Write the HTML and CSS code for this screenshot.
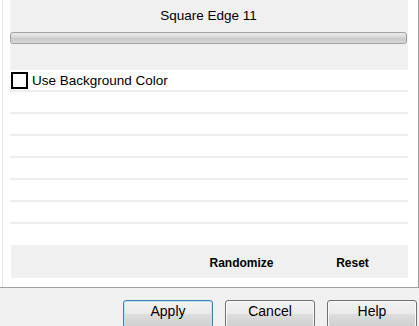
FILE: index.html
```html
<!DOCTYPE html>
<html>
<head>
<meta charset="utf-8">
<link rel="stylesheet" href="styles.css">
</head>
<body>
<div class="top">
  <div class="frame">
    <div class="panel">
      <div class="header">
        <div class="title">Square Edge 11</div>
        <div class="slider"></div>
      </div>
      <div class="row first">
        <span class="check"></span><span class="label">Use Background Color</span>
      </div>
      <div class="row"></div>
      <div class="row"></div>
      <div class="row"></div>
      <div class="row"></div>
      <div class="row"></div>
      <div class="row"></div>
      <div class="row last"></div>
      <div class="actions">
        <span class="spacer"></span>
        <span class="action">Randomize</span>
        <span class="action">Reset</span>
      </div>
    </div>
  </div>
</div>
<div class="bottom">
  <button class="btn default">Apply</button>
  <button class="btn">Cancel</button>
  <button class="btn">Help</button>
</div>
</body>
</html>
```
FILE: styles.css
```css
html, body {
  margin: 0;
  padding: 0;
  width: 419px;
  height: 326px;
  overflow: hidden;
  background: #f0f0f0;
  font-family: "Liberation Sans", Arial, sans-serif;
  color: #000;
}
.top {
  height: 287px;
  background: #fff;
  border-bottom: 1px solid #a0a0a0;
  display: flex;
}
.frame {
  margin-left: 2px;
  width: 404px;
  border-left: 1px solid #e6e6e6;
  border-right: 1px solid #9a9a9a;
  padding: 0 6px 0 7px;
}
.panel {
  width: 398px;
  display: flex;
  flex-direction: column;
}
.header {
  height: 70px;
  background: #f0f0f0;
  display: flex;
  flex-direction: column;
}
.title {
  font-size: 13.5px;
  text-align: center;
  line-height: 15px;
  padding-top: 8px;
  height: 24px;
  padding-right: 1px;
}
.slider {
  height: 10px;
  margin-right: 1px;
  border: 1px solid #a2a2a2;
  border-radius: 3px;
  background: linear-gradient(#ececec 0%, #dedede 30%, #c9c9c9 60%, #d8d8d8 100%);
}
.row {
  height: 20px;
  border-bottom: 2px solid #eeeeee;
  display: flex;
  align-items: center;
}
.row.last {
  height: 21px;
  border-bottom: none;
}
.check {
  width: 13px;
  height: 13px;
  border: 2px solid #000;
  margin-left: 1px;
  margin-top: 1px;
  background: #fff;
}
.label {
  font-size: 13.5px;
  margin-left: 4px;
}
.actions {
  height: 31px;
  padding-top: 2px;
  margin-left: 1px;
  background: #f0f0f0;
  display: grid;
  grid-template-columns: 1fr 111px 111px;
  align-items: center;
  font-size: 12px;
  font-weight: bold;
}
.action {
  text-align: center;
}
.bottom {
  display: flex;
  gap: 12px;
  padding: 12px 0 0 123px;
}
.btn {
  width: 90px;
  height: 28px;
  flex: none;
  border: 1px solid #707070;
  border-radius: 3px;
  background: linear-gradient(#f2f2f2 0%, #ebebeb 48%, #dddddd 52%, #cfcfcf 100%);
  font-family: "Liberation Sans", Arial, sans-serif;
  font-size: 14px;
  color: #000;
  padding: 0 0 6px 0;
  box-shadow: inset 0 0 0 1px #fafafa;
}
.btn.default {
  border-color: #3c7fb1;
  box-shadow: inset 0 0 0 1px #bde2f6;
}
```
